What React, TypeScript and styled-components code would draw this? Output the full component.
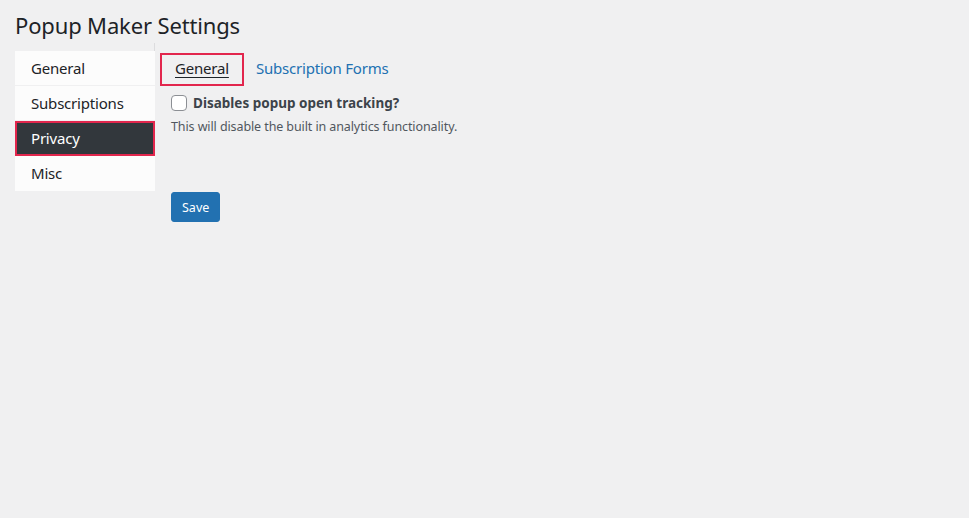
import React, { useState } from "react";
import styled, { createGlobalStyle } from "styled-components";

const Global = createGlobalStyle`
  html, body { margin: 0; padding: 0; background: #f0f0f1; }
  body { font-family: "Noto Sans", "Open Sans", sans-serif; color: #3c434a; }
  * { box-sizing: border-box; }
`;

const Page = styled.div`
  padding: 11px 15px 0 15px;
  min-height: 518px;
`;

const Title = styled.h1`
  margin: 0 0 3px 0;
  font-size: 22px;
  letter-spacing: -0.15px;
  font-weight: 400;
  line-height: 29px;
  color: #1d2327;
`;

const Layout = styled.div`
  display: flex;
  align-items: flex-start;
`;

const Sidebar = styled.nav`
  width: 140px;
  padding-top: 8px;
  border-right: 1px solid #dcdcde;
  display: flex;
  flex-direction: column;
`;

const NavItem = styled.a<{ $active?: boolean }>`
  display: flex;
  align-items: center;
  height: 35px;
  padding-left: ${(p) => (p.$active ? "14px" : "16px")};
  padding-bottom: 1px;
  font-size: 15px;
  letter-spacing: -0.2px;
  text-decoration: none;
  cursor: pointer;
  background: ${(p) => (p.$active ? "#32373c" : "#fcfcfc")};
  color: ${(p) => (p.$active ? "#ffffff" : "#1d2327")};
  border: ${(p) => (p.$active ? "2px solid #e2264d" : "none")};
  border-bottom: ${(p) => (p.$active ? "2px solid #e2264d" : "1px solid #f0f0f1")};
  margin-right: -1px;
  &:last-child { border-bottom: none; }
`;

const Content = styled.div`
  flex: 1;
  display: flex;
  flex-direction: column;
`;

const Tabs = styled.div`
  display: flex;
  align-items: center;
  gap: 10px;
  margin-top: 10px;
  padding-left: 5px;
`;

const Tab = styled.a<{ $active?: boolean }>`
  display: flex;
  align-items: center;
  height: 33px;
  padding: 0 13px 4px 13px;
  font-size: 15px;
  letter-spacing: -0.2px;
  cursor: pointer;
  color: ${(p) => (p.$active ? "#1d2327" : "#2271b1")};
  text-decoration: ${(p) => (p.$active ? "underline" : "none")};
  text-underline-offset: 3px;
  border: 2px solid ${(p) => (p.$active ? "#e2264d" : "transparent")};
  ${(p) => (p.$active ? "" : "padding-left: 0;")}
`;

const Field = styled.div`
  padding-left: 16px;
  margin-top: 8px;
  display: flex;
  flex-direction: column;
`;

const CheckRow = styled.label`
  display: flex;
  align-items: center;
  gap: 6px;
  font-size: 13.5px;
  font-weight: 700;
  color: #3c434a;
  cursor: pointer;
  height: 18px;
`;

const Box = styled.input`
  appearance: none;
  margin: 0;
  width: 16px;
  height: 16px;
  border: 1px solid #8c8f94;
  border-radius: 4px;
  background: #fff;
`;

const Desc = styled.p`
  margin: 5px 0 0 0;
  font-size: 12.5px;
  letter-spacing: -0.1px;
  line-height: 19px;
  color: #50575e;
`;

const SaveButton = styled.button`
  margin: 56px 0 0 16px;
  align-self: flex-start;
  height: 30px;
  padding: 0 10px;
  background: #2271b1;
  color: #fff;
  border: 1px solid #2271b1;
  border-radius: 3px;
  font-family: inherit;
  font-size: 12.5px;
  cursor: pointer;
`;

export default function App() {
  const [checked, setChecked] = useState(false);
  return (
    <>
      <Global />
      <Page>
        <Title>Popup Maker Settings</Title>
        <Layout>
          <Sidebar>
            <NavItem>General</NavItem>
            <NavItem>Subscriptions</NavItem>
            <NavItem $active>Privacy</NavItem>
            <NavItem>Misc</NavItem>
          </Sidebar>
          <Content>
            <Tabs>
              <Tab $active>General</Tab>
              <Tab>Subscription Forms</Tab>
            </Tabs>
            <Field>
              <CheckRow>
                <Box type="checkbox" checked={checked} onChange={() => setChecked(!checked)} />
                Disables popup open tracking?
              </CheckRow>
              <Desc>This will disable the built in analytics functionality.</Desc>
            </Field>
            <SaveButton>Save</SaveButton>
          </Content>
        </Layout>
      </Page>
    </>
  );
}
